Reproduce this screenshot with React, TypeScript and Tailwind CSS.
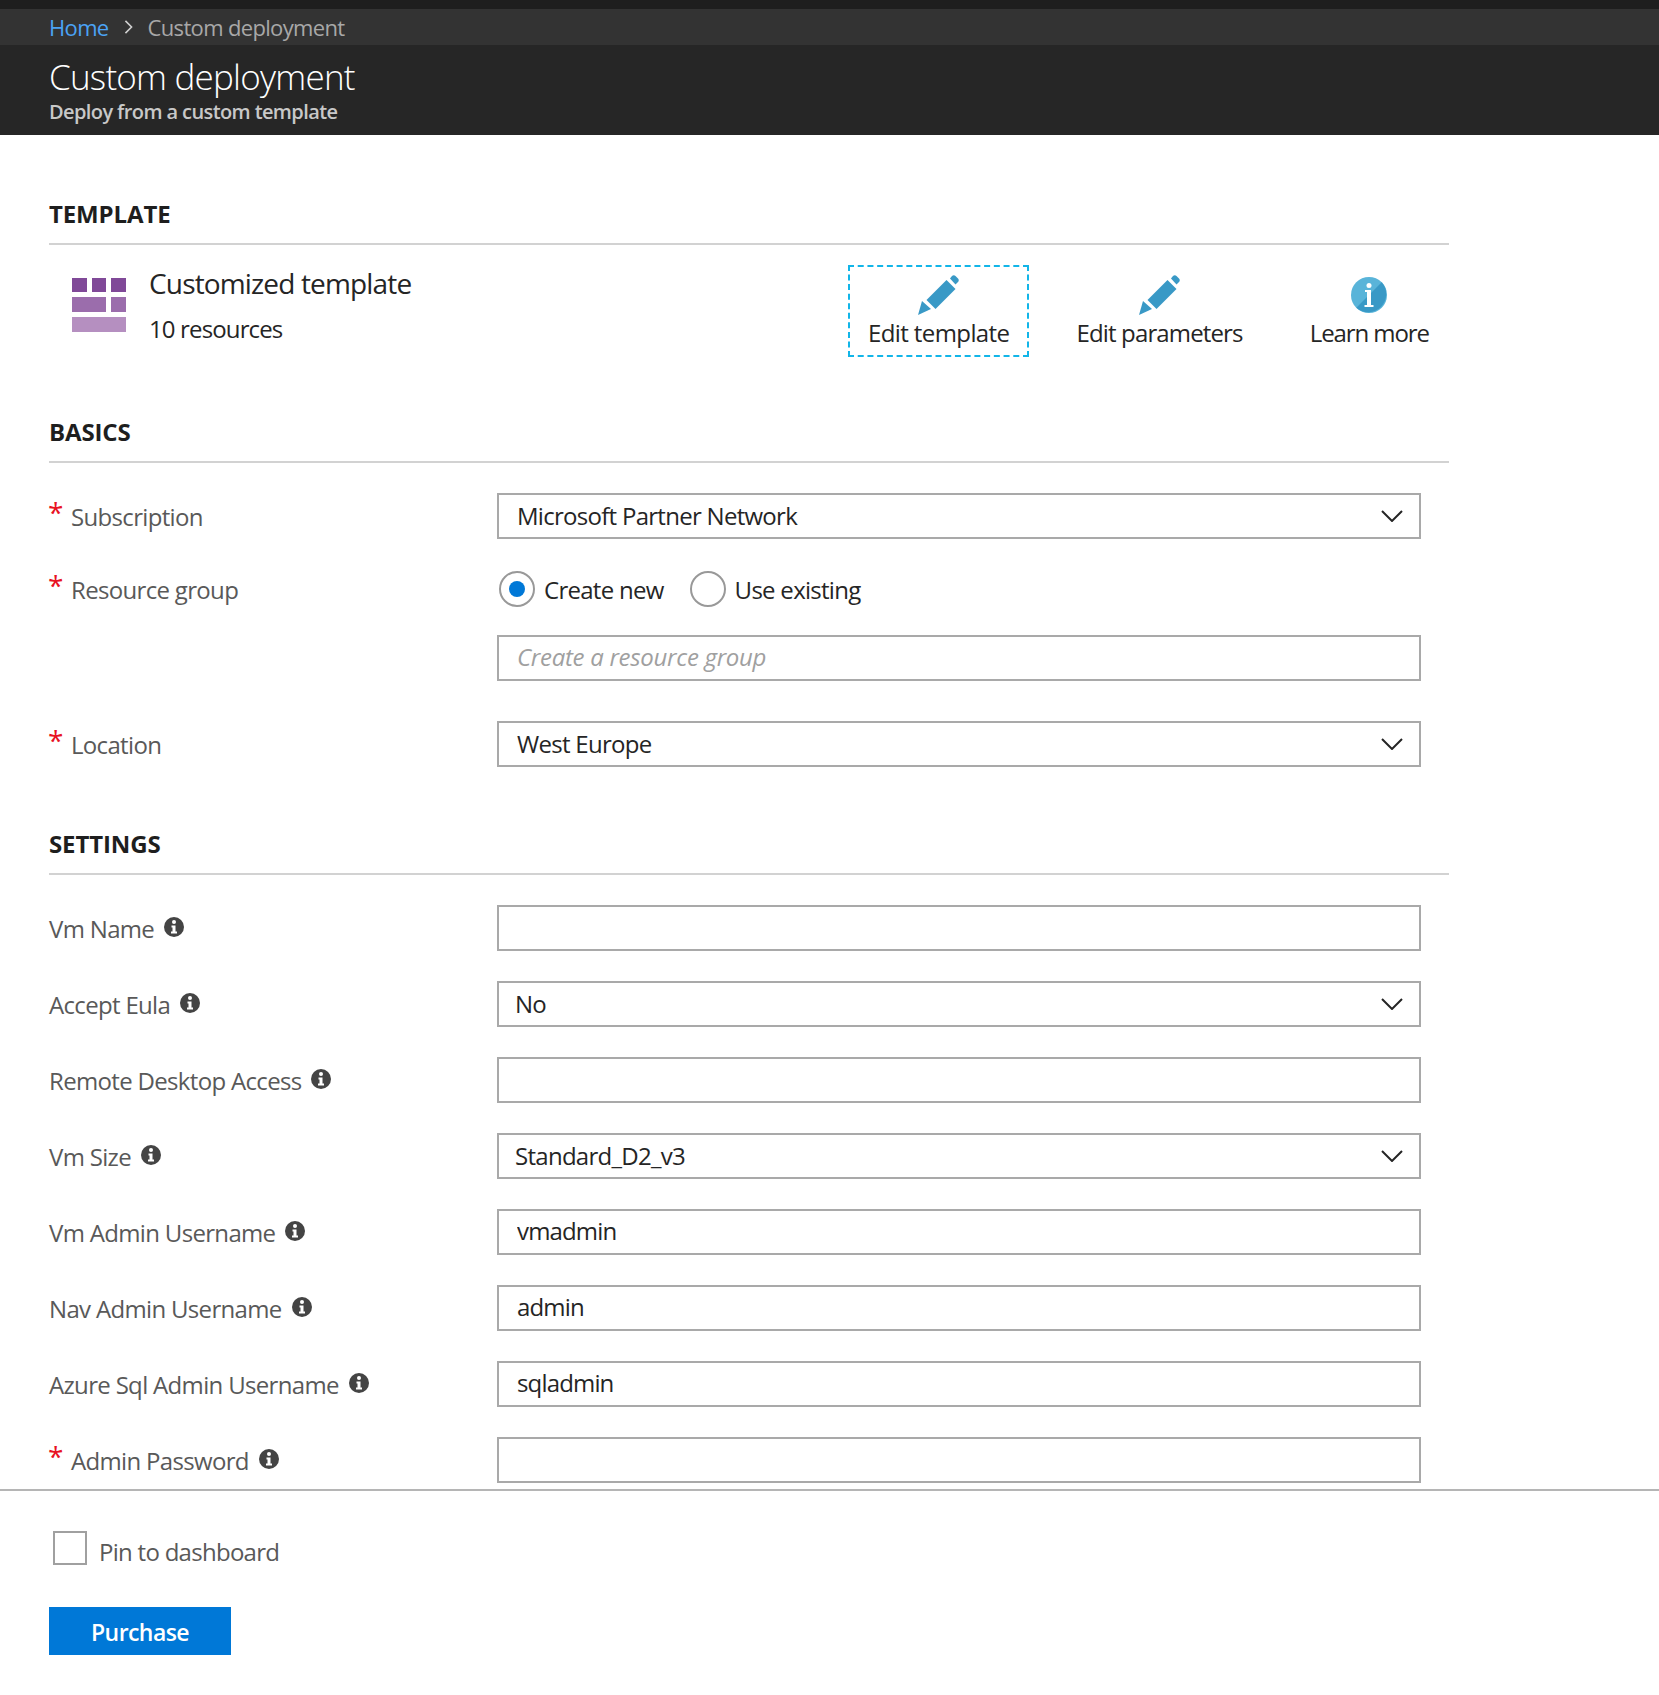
import type { ReactNode } from 'react'

const SETTINGS = [
  { label: 'Vm Name', value: '' },
  { label: 'Accept Eula', value: 'No', select: true },
  { label: 'Remote Desktop Access', value: '' },
  { label: 'Vm Size', value: 'Standard_D2_v3', select: true },
  { label: 'Vm Admin Username', value: 'vmadmin' },
  { label: 'Nav Admin Username', value: 'admin' },
  { label: 'Azure Sql Admin Username', value: 'sqladmin' },
  { label: 'Admin Password', value: '', required: true },
]

function SectionHeading({ children }: { children: ReactNode }) {
  return (
    <h2 className="h-[45px] border-b-2 border-[#d2d2d2] text-[24px] leading-[28px] font-bold tracking-[-0.005em] text-[#1e1e1e]">
      {children}
    </h2>
  )
}

function InfoDot() {
  return (
    <svg viewBox="0 0 20 20" className="ml-[10px] h-[20px] w-[20px] shrink-0 -translate-y-[1px]">
      <circle cx="10" cy="10" r="10" fill="#444444" />
      <circle cx="10" cy="5" r="2" fill="#ffffff" />
      <path d="M7.5 8.5h4v6h1.5v2h-6v-2h1.5v-4h-1z" fill="#ffffff" />
    </svg>
  )
}

function Pencil() {
  return (
    <svg viewBox="0 0 41 40" className="h-[40px] w-[41px]">
      <path d="M0 40l4-14 9 8z" fill="#3999c6" />
      <path d="M7 23L27 3l9 9-20 20z" fill="#3999c6" transform="translate(1.5 2)" />
      <path d="M32 3.5l2-2.5c1-1 2.500-1 3.500 0l2.500 2.500c1 1 1 2.500 0 3.500l-2.500 2.500z" fill="#3999c6" />
    </svg>
  )
}

function LearnIcon() {
  return (
    <svg viewBox="0 0 36 36" className="h-[36px] w-[36px]">
      <circle cx="18" cy="18" r="18" fill="#59b4d9" />
      <path d="M30.700 5.300A18 18 0 0 1 5.300 30.700z" fill="#3999c6" />
      <circle cx="18" cy="8.500" r="2.500" fill="#ffffff" />
      <path d="M14 13h6v15h2.500v2h-9v-2H16V15h-2z" fill="#ffffff" />
    </svg>
  )
}

function Chevron() {
  return (
    <svg viewBox="0 0 22 12" className="h-[12px] w-[22px]" fill="none" stroke="#252525" strokeWidth="2">
      <path d="M1 1l10 10L21 1" />
    </svg>
  )
}

function Asterisk() {
  return (
    <span className="mr-[10px] -ml-[1px] h-[36px] w-[13px] shrink-0 -translate-y-[4px] text-[28px] leading-[36px] text-[#e81123]">*</span>
  )
}

function FieldLabel({ label, required, info }: { label: string; required?: boolean; info?: boolean }) {
  return (
    <div className="flex w-[448px] shrink-0 items-center text-[24px] tracking-[-0.028em] text-[#595959]">
      {required && <Asterisk />}
      <span className="translate-y-[1px]">{label}</span>
      {info && <InfoDot />}
    </div>
  )
}

function TextBox({ value, placeholder }: { value?: string; placeholder?: string }) {
  return (
    <input
      readOnly
      value={value ?? ''}
      placeholder={placeholder}
      className="h-[46px] w-[924px] border-2 border-[#a9a9a9] bg-white px-[18px] pb-[3px] text-[24px] tracking-[-0.035em] text-[#252525] outline-none placeholder:tracking-[-0.012em] placeholder:text-[#a0a0a0] placeholder:italic"
    />
  )
}

function SelectBox({ value, inset }: { value: string; inset?: boolean }) {
  return (
    <div
      className={`flex h-[46px] w-[924px] items-center justify-between border-2 border-[#a9a9a9] bg-white pr-[16px] text-[24px] tracking-[-0.03em] text-[#252525] ${inset ? 'pl-[16px]' : 'pl-[18px]'}`}
    >
      <span>{value}</span>
      <Chevron />
    </div>
  )
}

function Radio({ label, checked }: { label: string; checked?: boolean }) {
  return (
    <label className="flex items-center gap-[9px] text-[24px] tracking-[-0.03em] text-[#252525]">
      <span className="flex h-[36px] w-[36px] items-center justify-center rounded-full border-2 border-[#999999]">
        {checked && <span className="h-[16px] w-[16px] rounded-full bg-[#0078d7]" />}
      </span>
      <span className="translate-y-[1px]">{label}</span>
    </label>
  )
}

function ActionButton({ icon, label, focused, tracking }: { icon: ReactNode; label: string; focused?: boolean; tracking: string }) {
  return (
    <button
      type="button"
      className={`flex h-[92px] flex-col items-center px-[18px] pt-[8px] text-[24px] leading-[36px] text-[#252525] ${tracking} ${focused ? 'border-2 border-dashed border-[#12b5e8]' : 'border-2 border-transparent'}`}
    >
      <span className="flex h-[40px] items-center">{icon}</span>
      <span>{label}</span>
    </button>
  )
}

export default function App() {
  return (
    <div className="min-h-screen bg-white font-['Open_Sans','Noto_Sans',sans-serif]">
      <div className="h-[9px] bg-[#1e1e1e]" />
      <nav className="flex h-[36px] items-center bg-[#333333] pl-[49px] text-[22px] tracking-[-0.03em]">
        <a className="text-[#4ba3f5]">Home</a>
        <svg viewBox="0 0 10 16" className="mx-[15px] h-[14px] w-[9px]" fill="none" stroke="#d0d0d0" strokeWidth="1.8">
          <path d="M1.500 1l7 7-7 7" />
        </svg>
        <span className="text-[#a8a8a8]">Custom deployment</span>
      </nav>
      <header className="h-[90px] bg-[#262626] pl-[49px]">
        <h1 className="pt-[10px] text-[35px] leading-[44px] font-light tracking-[-0.022em] text-white">Custom deployment</h1>
        <p className="text-[20px] leading-[26px] font-semibold tracking-[-0.03em] text-[#c8c8c8]">Deploy from a custom template</p>
      </header>

      <main className="h-[1354px] overflow-hidden pt-[65px] pl-[49px]">
        <div className="w-[1400px]">
          <SectionHeading>TEMPLATE</SectionHeading>
          <div className="flex h-[173px] items-start justify-between pt-[20px]">
            <div className="flex">
              <div className="mt-[13px] ml-[23px] flex h-[54px] w-[54px] flex-col justify-between">
                <div className="flex justify-between">
                  <span className="h-[14px] w-[15px] bg-[#804998]" />
                  <span className="h-[14px] w-[14px] bg-[#804998]" />
                  <span className="h-[14px] w-[15px] bg-[#804998]" />
                </div>
                <div className="flex justify-between">
                  <span className="h-[15px] w-[34px] bg-[#9b6dac]" />
                  <span className="h-[15px] w-[15px] bg-[#9b6dac]" />
                </div>
                <span className="h-[15px] w-[54px] bg-[#b58fc0]" />
              </div>
              <div className="ml-[23px] text-[#252525]">
                <div className="text-[28px] leading-[36px] tracking-[-0.03em]">Customized template</div>
                <div className="mt-[10px] text-[24px] leading-[36px] tracking-[-0.036em]">10 resources</div>
              </div>
            </div>
            <div className="flex w-[601px] items-start justify-between">
              <ActionButton icon={<Pencil />} label="Edit template" focused tracking="tracking-[-0.025em]" />
              <ActionButton icon={<Pencil />} label="Edit parameters" tracking="tracking-[-0.036em]" />
              <ActionButton icon={<LearnIcon />} label="Learn more" tracking="tracking-[-0.045em]" />
            </div>
          </div>

          <SectionHeading>BASICS</SectionHeading>
          <div className="mt-[30px] flex flex-col">
            <div className="flex items-center">
              <FieldLabel label="Subscription" required />
              <SelectBox value="Microsoft Partner Network" />
            </div>
            <div className="mt-[32px] flex items-center">
              <FieldLabel label="Resource group" required />
              <div className="flex gap-[26px]">
                <div className="ml-[2px]"><Radio label="Create new" checked /></div>
                <Radio label="Use existing" />
              </div>
            </div>
            <div className="mt-[28px] ml-[448px]">
              <TextBox placeholder="Create a resource group" />
            </div>
            <div className="mt-[40px] flex items-center">
              <FieldLabel label="Location" required />
              <SelectBox value="West Europe" />
            </div>
          </div>

          <div className="mt-[63px]">
            <SectionHeading>SETTINGS</SectionHeading>
          </div>
          <div className="mt-[30px] flex flex-col gap-[30px]">
            {SETTINGS.map((row) => (
              <div key={row.label} className="flex items-center">
                <FieldLabel label={row.label} required={row.required} info />
                {row.select ? <SelectBox value={row.value} inset /> : <TextBox value={row.value} />}
              </div>
            ))}
          </div>
        </div>
      </main>

      <footer className="border-t-2 border-[#b5b5b5] pl-[49px]">
        <label className="mt-[40px] flex items-center text-[24px] tracking-[-0.03em] text-[#595959]">
          <span className="ml-[4px] h-[34px] w-[34px] -translate-y-[1px] border-2 border-[#a0a0a0]" />
          <span className="ml-[12px] translate-y-[3px]">Pin to dashboard</span>
        </label>
        <button type="button" className="mt-[40px] h-[48px] w-[182px] bg-[#0078d7] pt-[3px] text-[23px] font-semibold tracking-[-0.025em] text-white">
          Purchase
        </button>
      </footer>
    </div>
  )
}
